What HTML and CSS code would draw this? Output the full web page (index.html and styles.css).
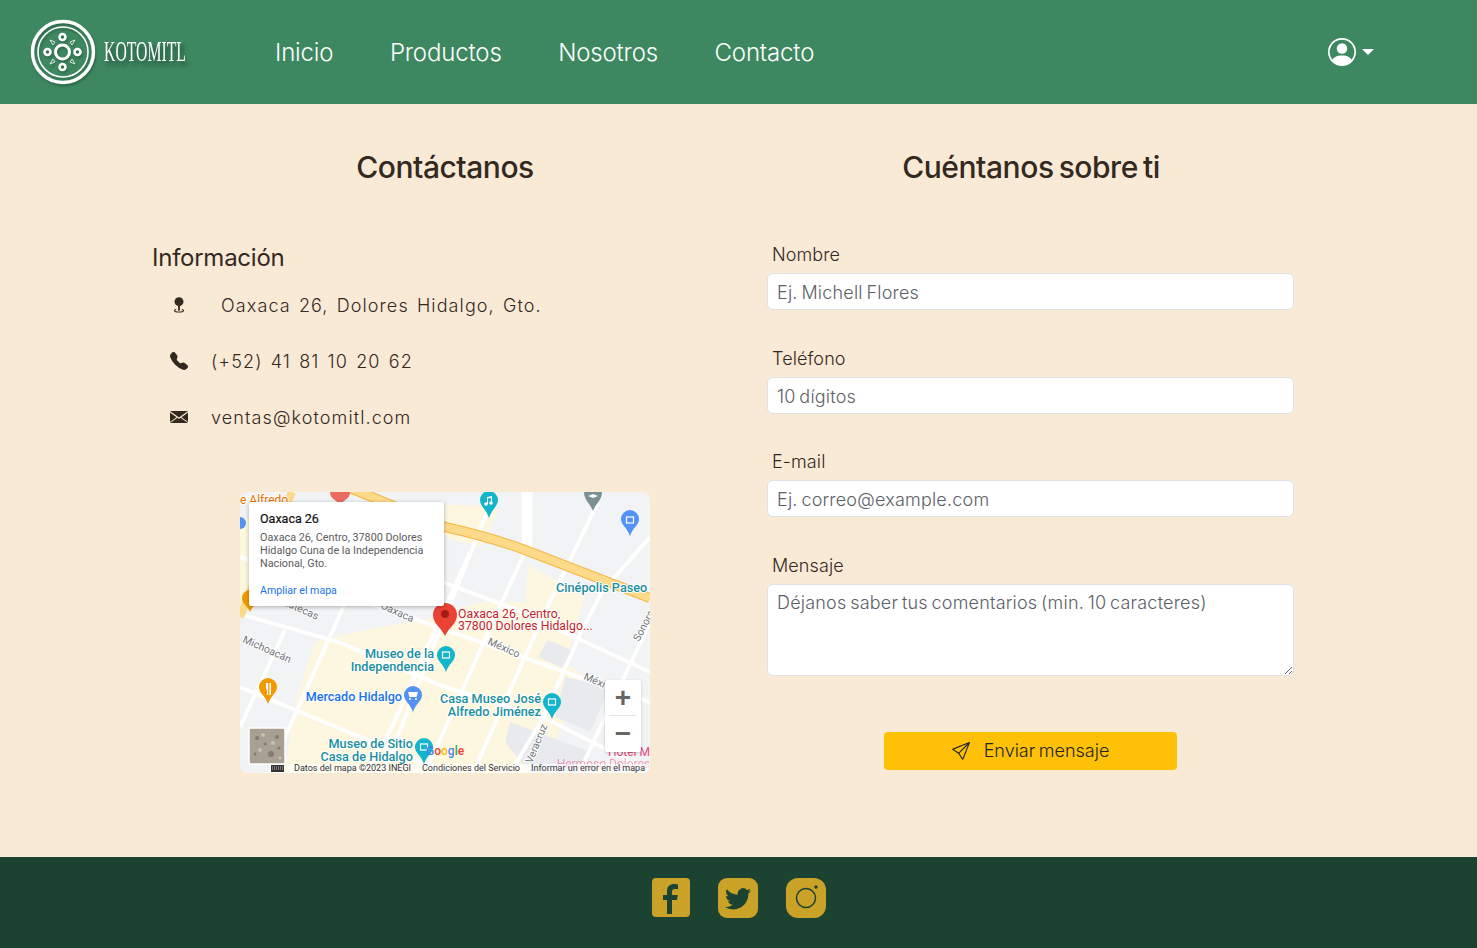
FILE: index.html
```html
<!DOCTYPE html>
<html lang="en">

<head>
    <meta charset="UTF-8">
    <meta name="viewport" content="width=device-width, initial-scale=1.0">
    <title>Kotomitl - Contacto</title>
    <link rel="stylesheet" href="styles.css">
</head>

<body>
    <header class="topbar">
        <a class="brand" href="#">
            <svg class="brand-logo" viewBox="0 0 66 66" width="66" height="66">
                <circle cx="33" cy="33" r="30.5" fill="none" stroke="#fff" stroke-width="3.5" />
                <circle cx="33" cy="33" r="25" fill="none" stroke="#fff" stroke-width="1.6" />
                <circle cx="32.500" cy="33" r="7" fill="none" stroke="#fff" stroke-width="3" />
                <circle cx="32.500" cy="18" r="3" fill="none" stroke="#fff" stroke-width="2.6" />
                <circle cx="32.500" cy="48" r="3" fill="none" stroke="#fff" stroke-width="2.6" />
                <circle cx="17.500" cy="33" r="3" fill="none" stroke="#fff" stroke-width="2.6" />
                <circle cx="47.500" cy="33" r="3" fill="none" stroke="#fff" stroke-width="2.6" />
                <path d="M20 21l5 2-2 3zM45 21l-5 2 2 3zM20 45l5-2-2-3zM45 45l-5-2 2-3z" fill="none" stroke="#fff" stroke-width=".8" />
            </svg>
            <svg class="brand-name" viewBox="0 0 88 30" width="88" height="30">
                <text x="1" y="24" textLength="82" lengthAdjust="spacingAndGlyphs">KOTOMITL</text>
            </svg>
        </a>
        <nav class="nav">
            <a href="#">Inicio</a>
            <a href="#">Productos</a>
            <a href="#">Nosotros</a>
            <a href="#">Contacto</a>
        </nav>
        <button class="user-btn" type="button">
            <svg viewBox="0 0 16 16" width="28" height="28" fill="#fff">
                <path d="M11 6a3 3 0 1 1-6 0 3 3 0 0 1 6 0z" />
                <path fill-rule="evenodd" d="M0 8a8 8 0 1 1 16 0A8 8 0 0 1 0 8zm8-7a7 7 0 0 0-5.468 11.37C3.242 11.226 4.805 10 8 10s4.757 1.225 5.468 2.37A7 7 0 0 0 8 1z" />
            </svg>
            <span class="caret"></span>
        </button>
    </header>

    <main class="content">
        <section class="col">
            <h2 class="title">Contáctanos</h2>
            <h3 class="info-title">Información</h3>
            <ul class="info-list">
                <li>
                    <svg class="info-icon" viewBox="0 0 16 16" width="18" height="18" fill="#33291f">
                        <circle cx="8" cy="5" r="4" />
                        <rect x="7.2" y="8" width="1.6" height="5" />
                        <path d="M5.5 11.5c-1.6.4-2 1-2 1.5 0 1 2 1.7 4.500 1.700s4.500-.7 4.500-1.700c0-.5-.4-1.100-2-1.500v1c.6.1 1 .3 1 .5 0 .4-1.500.8-3.500.8s-3.500-.4-3.500-.8c0-.2.4-.4 1-.5z" />
                    </svg>
                    <span class="info-text info-text-far">Oaxaca 26, Dolores Hidalgo, Gto.</span>
                </li>
                <li>
                    <svg class="info-icon" viewBox="0 0 16 16" width="18" height="18" fill="#33291f">
                        <path d="M1.885.511a1.745 1.745 0 0 1 2.61.163L6.29 2.98c.329.423.445.974.315 1.494l-.547 2.19a.678.678 0 0 0 .178.643l2.457 2.457a.678.678 0 0 0 .644.178l2.189-.547a1.745 1.745 0 0 1 1.494.315l2.306 1.794c.829.645.905 1.87.163 2.611l-1.034 1.034c-.74.74-1.846 1.065-2.877.702a18.634 18.634 0 0 1-7.01-4.42 18.634 18.634 0 0 1-4.42-7.009c-.362-1.03-.037-2.137.703-2.877L1.885.511z" />
                    </svg>
                    <span class="info-text">(+52) 41 81 10 20 62</span>
                </li>
                <li>
                    <svg class="info-icon" viewBox="0 0 18 18" width="18" height="18" fill="#33291f">
                        <path d="M0 3h18L9 9.500z" />
                        <path d="M0 4.500v9.500l6.500-4.800zM18 4.500v9.500l-6.500-4.800z" />
                        <path d="M0 15h18l-7.500-5.200L9 11 7.500 9.800z" />
                    </svg>
                    <span class="info-text">ventas@kotomitl.com</span>
                </li>
            </ul>

            <div class="map">
                <svg class="map-canvas" viewBox="0 0 410 281" width="410" height="281">
                    <rect width="410" height="281" fill="#f1f3f4" />
                    <g fill="#fef7e0">
                        <polygon points="125,138 195,125 242,110 285,110 288,73 345,105 325,170 345,185 300,281 45,281 55,210 75,150" />
                        <polygon points="0,30 50,5 40,100 0,120" />
                        <polygon points="205,13 235,13 258,18 240,55 205,45" />
                    </g>
                    <g fill="#e8eaed">
                        <polygon points="308,148 332,158 322,176 298,165" />
                        <polygon points="325,185 370,195 350,240 315,225" />
                        <polygon points="270,230 350,260 345,281 290,281 265,250" />
                    </g>
                    <g fill="none" stroke="#fff" stroke-width="4">
                        <path d="M287 0V58" stroke-width="11" />
                        <path d="M0 65L155 120 410 210" />
                        <path d="M100 50L205 91 272 116 410 180" />
                        <path d="M0 122L98 150 205 195 305 226 410 280" />
                        <path d="M0 195L205 280" />
                        <path d="M255 0L235 50 215 100 143 281" />
                        <path d="M285 60L262 110 185 281" />
                        <path d="M358 10L305 120 233 281" />
                        <path d="M410 45L362 100 342 138 302 228 270 281" />
                        <path d="M410 130L345 268 340 281" />
                        <path d="M45 138L0 235" />
                        <path d="M110 100L45 245 30 281" />
                        <path d="M230 60L152 235 125 281" />
                    </g>
                    <g fill="none">
                        <path d="M110 -4L205 35Q250 45 285 58L410 106" stroke="#f5b63f" stroke-width="10" />
                        <path d="M110 -4L205 35Q250 45 285 58L410 106" stroke="#fdd98a" stroke-width="8" />
                        <path d="M52 0L0 125" stroke="#fdd98a" stroke-width="8" />
                    </g>
                    <g class="road-labels">
                        <text transform="translate(0 12)" class="alfredo">e Alfredo</text>
                        <text transform="translate(2 150) rotate(24)">Michoacán</text>
                        <text transform="translate(32 108) rotate(24)">Zacatecas</text>
                        <text transform="translate(140 116) rotate(24)">Oaxaca</text>
                        <text transform="translate(247 152) rotate(24)">México</text>
                        <text transform="translate(343 187) rotate(24)">Méxi</text>
                        <text transform="translate(292 272) rotate(-68)">Veracruz</text>
                        <text transform="translate(399 150) rotate(-62)">Sonora</text>
                    </g>
                    <g class="teal-labels">
                        <text x="316" y="100">Cinépolis Paseo</text>
                        <text x="194" y="166" text-anchor="end">Museo de la</text>
                        <text x="194" y="179" text-anchor="end">Independencia</text>
                        <text x="301" y="211" text-anchor="end">Casa Museo José</text>
                        <text x="301" y="224" text-anchor="end">Alfredo Jiménez</text>
                        <text x="173" y="256" text-anchor="end">Museo de Sitio</text>
                        <text x="173" y="269" text-anchor="end">Casa de Hidalgo</text>
                    </g>
                    <text class="blue-label" x="162" y="209" text-anchor="end">Mercado Hidalgo</text>
                    <text class="red-label" x="218" y="126">Oaxaca 26, Centro,</text>
                    <text class="red-label" x="218" y="138">37800 Dolores Hidalgo...</text>
                    <text class="hotel-label" x="410" y="264" text-anchor="end">Hotel M</text>
                    <text class="hotel-label faded" x="410" y="276" text-anchor="end">Hermoso Dolores</text>

                    <!-- pins -->
                    <path d="M240 8a9 9 0 0 1 18 0c0 6-6 9-9 18-3-9-9-12-9-18z" fill="#12b5cb" />
                    <path d="M344 0h18c0 8-6 11-9 19-3-8-9-11-9-19z" fill="#7b9095" />
                    <path d="M381 27a9 9 0 0 1 18 0c0 6-6 8-9 17-3-9-9-11-9-17z" fill="#5491f5" />
                    <path d="M90 0h20c0 8-6 6-10 14-4-8-10-6-10-14z" fill="#ea6b60" />
                    <path d="M197 163a9 9 0 0 1 18 0c0 6-6 8-9 17-3-9-9-11-9-17z" fill="#12b5cb" />
                    <path d="M164 203a9 9 0 0 1 18 0c0 6-6 8-9 17-3-9-9-11-9-17z" fill="#5491f5" />
                    <path d="M303 210a9 9 0 0 1 18 0c0 6-6 8-9 17-3-9-9-11-9-17z" fill="#12b5cb" />
                    <path d="M175 255a9 9 0 0 1 18 0c0 6-6 8-9 17-3-9-9-11-9-17z" fill="#12b5cb" />
                    <path d="M19 195a9 9 0 0 1 18 0c0 6-6 8-9 17-3-9-9-11-9-17z" fill="#f29900" />
                    <path d="M2 106a8 8 0 0 1 16 0c0 6-6 8-8 14-2-6-8-8-8-14z" fill="#f29900" />
                    <circle cx="0" cy="31" r="6" fill="#5491f5" />
                    <g fill="none" stroke="#fff" stroke-width="1.200">
                        <rect x="202.500" y="160" width="7" height="6" />
                        <rect x="308.500" y="207" width="7" height="6" />
                        <rect x="180.500" y="252" width="7" height="6" />
                        <rect x="386.500" y="25" width="7" height="6" />
                    </g>
                    <g fill="#fff">
                        <path d="M168 200h10l-1.500 5h-7z" />
                        <circle cx="170" cy="207" r="1" />
                        <circle cx="176" cy="207" r="1" />
                        <path d="M26 191v5c0 1 .5 1.500 1 1.500V203h1.200v-12zM31 191h-1.500v12H31z" />
                        <circle cx="246" cy="12" r="1.800" />
                        <circle cx="251" cy="11" r="1.800" />
                        <path d="M247 12V5l5-1v7h-1V6l-3 .6V12z" />
                        <path d="M348 4l5-2 5 2-5 2z" />
                    </g>
                    <path d="M193 123c0-7 5-12 12-12s12 5 12 12c0 9-8 12-12 21-4-9-12-12-12-21z" fill="#ea4335" />
                    <circle cx="205" cy="122" r="4" fill="#a61c14" />

                    <!-- street view thumb and footer strip -->
                    <rect x="9" y="236" width="36" height="36" rx="2" fill="#a9a094" stroke="#fff" stroke-width="1.500" />
                    <g fill="#847b6e">
                        <circle cx="31" cy="262" r="3" />
                        <circle cx="17" cy="246" r="2" />
                        <circle cx="37" cy="245" r="2" />
                        <circle cx="25" cy="252" r="1.500" />
                        <circle cx="15" cy="262" r="1.500" />
                        <circle cx="39" cy="256" r="1.500" />
                    </g>
                    <g fill="#c6beb1">
                        <circle cx="23" cy="243" r="2" />
                        <circle cx="33" cy="251" r="2" />
                        <circle cx="20" cy="258" r="2" />
                        <circle cx="40" cy="266" r="1.500" />
                    </g>
                    <rect x="48" y="272" width="362" height="9" fill="#fff" opacity=".65" />
                    <rect x="30" y="272" width="15" height="9" fill="#fff" />
                    <rect x="31" y="273" width="13" height="7" fill="#333" />
                    <path d="M32 275h11M32 277h11" stroke="#fff" stroke-width=".7" stroke-dasharray="1 1" />
                    <text class="map-foot" x="54" y="279">Datos del mapa ©2023 INEGI</text>
                    <text class="map-foot" x="182" y="279">Condiciones del Servicio</text>
                    <text class="map-foot" x="291" y="279">Informar un error en el mapa</text>
                    <text class="google" x="186" y="263"><tspan fill="#4285f4">G</tspan><tspan fill="#ea4335">o</tspan><tspan fill="#fbbc05">o</tspan><tspan fill="#4285f4">g</tspan><tspan fill="#34a853">l</tspan><tspan fill="#ea4335">e</tspan></text>
                </svg>
                <div class="map-popup">
                    <div class="popup-name">Oaxaca 26</div>
                    <div class="popup-address">Oaxaca 26, Centro, 37800 Dolores Hidalgo Cuna de la Independencia Nacional, Gto.</div>
                    <a class="popup-link" href="#">Ampliar el mapa</a>
                </div>
                <div class="map-zoom">
                    <button type="button">+</button>
                    <span class="map-zoom-line"></span>
                    <button type="button">&minus;</button>
                </div>
            </div>
        </section>

        <section class="col">
            <h2 class="title">Cuéntanos sobre ti</h2>
            <form class="contact-form">
                <div class="field">
                    <label for="nombre">Nombre</label>
                    <input type="text" id="nombre" placeholder="Ej. Michell Flores">
                </div>
                <div class="field">
                    <label for="telefono">Teléfono</label>
                    <input type="text" id="telefono" placeholder="10 dígitos">
                </div>
                <div class="field">
                    <label for="email">E-mail</label>
                    <input type="text" id="email" placeholder="Ej. correo@example.com">
                </div>
                <div class="field">
                    <label for="mensaje">Mensaje</label>
                    <textarea id="mensaje" placeholder="Déjanos saber tus comentarios (min. 10 caracteres)"></textarea>
                </div>
                <button class="send-btn" type="button">
                    <svg viewBox="0 0 16 16" width="16" height="16" fill="#212529">
                        <path d="M15.854.146a.5.5 0 0 1 .11.54l-5.819 14.547a.75.75 0 0 1-1.329.124l-3.178-4.995L.643 7.184a.75.75 0 0 1 .124-1.33L15.314.037a.5.5 0 0 1 .54.11ZM6.636 10.07l2.761 4.338L14.13 2.576 6.636 10.07Zm6.787-8.201L1.591 6.602l4.339 2.76 7.494-7.493Z" />
                    </svg>
                    Enviar mensaje
                </button>
            </form>
        </section>
    </main>

    <footer class="footer">
        <a class="social social-fb" href="#">
            <svg viewBox="0 0 38 39" width="38" height="39">
                <path d="M20 36V22h5l.7-5H20v-3c0-2 .8-3 2.800-3H26V6.500c-.8-.1-2-.5-3.800-.5C18 6 15 8.500 15 13v4h-4v5h4v14z" fill="#1c4231" />
            </svg>
        </a>
        <a class="social social-tw" href="#">
            <svg viewBox="0 0 16 16" width="26" height="26" fill="#1c4231">
                <path d="M5.026 15c6.038 0 9.341-5.003 9.341-9.334 0-.14 0-.282-.006-.422A6.685 6.685 0 0 0 16 3.542a6.658 6.658 0 0 1-1.889.518 3.301 3.301 0 0 0 1.447-1.817 6.533 6.533 0 0 1-2.087.793A3.286 3.286 0 0 0 7.875 6.03a9.325 9.325 0 0 1-6.767-3.429 3.289 3.289 0 0 0 1.018 4.382A3.323 3.323 0 0 1 .64 6.575v.045a3.288 3.288 0 0 0 2.632 3.218 3.203 3.203 0 0 1-.865.115 3.23 3.23 0 0 1-.614-.057 3.283 3.283 0 0 0 3.067 2.277A6.588 6.588 0 0 1 .78 13.58a6.32 6.32 0 0 1-.78-.045A9.344 9.344 0 0 0 5.026 15z" />
            </svg>
        </a>
        <a class="social social-ig" href="#">
            <svg viewBox="0 0 40 40" width="40" height="40">
                <circle cx="20" cy="20" r="9.500" fill="none" stroke="#1c4231" stroke-width="1.500" />
                <circle cx="30" cy="9" r="1.700" fill="#1c4231" />
            </svg>
        </a>
    </footer>
</body>

</html>
```

FILE: styles.css
```css
* {
    box-sizing: border-box;
}

body {
    margin: 0;
    font-family: Inter, "Open Sans", sans-serif;
    background-color: #f9ead6;
    color: #33291f;
    display: flex;
    flex-direction: column;
    height: 948px;
}

a {
    text-decoration: none;
}

/* top bar */
.topbar {
    height: 104px;
    flex-shrink: 0;
    background-color: #3d8860;
    display: flex;
    align-items: center;
    padding-left: 30px;
}

.brand {
    display: flex;
    align-items: center;
    gap: 7px;
    width: 245px;
}

.brand-logo {
    filter: drop-shadow(1px 2px 1px rgba(0, 0, 0, .25));
}

.brand-name {
    overflow: visible;
    filter: drop-shadow(3px 4px 2px rgba(0, 0, 0, .5));
}

.brand-name text {
    font-family: "Liberation Serif", serif;
    font-size: 29px;
    fill: #fff;
}

.nav {
    display: flex;
    gap: 56.5px;
}

.nav a {
    color: #fff;
    font-size: 24px;
    font-weight: 300;
    letter-spacing: -.15px;
}

.user-btn {
    margin-left: 514px;
    padding: 0;
    border: 0;
    background: none;
    display: flex;
    align-items: center;
    gap: 6px;
}

.caret {
    width: 0;
    height: 0;
    border-top: 6px solid #fff;
    border-left: 6px solid transparent;
    border-right: 6px solid transparent;
}

/* main columns */
.content {
    flex-grow: 1;
    display: grid;
    grid-template-columns: 586px 586px;
    padding: 0 153px 0 152px;
}

.title {
    margin: 44px 0 0;
    font-size: 30px;
    line-height: 38px;
    font-weight: 500;
    letter-spacing: -.45px;
    word-spacing: -2.5px;
    text-align: center;
}

.info-title {
    margin: 57px 0 0;
    font-size: 24px;
    line-height: 29px;
    font-weight: 400;
    letter-spacing: -.25px;
}

.info-list {
    list-style: none;
    margin: 0;
    padding: 0 0 0 18px;
}

.info-list li {
    height: 56px;
    display: flex;
    align-items: center;
    gap: 23px;
}

.info-list li:first-child {
    margin-top: 5px;
}

.info-text {
    font-size: 18px;
    font-weight: 300;
    letter-spacing: 1.1px;
    word-spacing: 2px;
}

.info-text-far {
    margin-left: 10px;
}

/* map */
.map {
    position: relative;
    width: 410px;
    height: 281px;
    margin: 47px 0 0 88px;
    border-radius: 8px;
    overflow: hidden;
    font-family: Roboto, sans-serif;
}

.map-canvas {
    display: block;
}

.road-labels text {
    font-size: 10.500px;
    fill: #70757a;
    stroke: #fff;
    stroke-width: 2px;
    paint-order: stroke;
}

.road-labels .alfredo {
    font-size: 12px;
    fill: #e37400;
}

.teal-labels text {
    font-size: 12.700px;
    font-weight: 500;
    fill: #1a8f9f;
    stroke: #fff;
    stroke-width: 2px;
    paint-order: stroke;
}

.blue-label {
    font-size: 12.600px;
    font-weight: 500;
    fill: #1a73e8;
    stroke: #fff;
    stroke-width: 2px;
    paint-order: stroke;
}

.red-label {
    font-size: 12.300px;
    fill: #c5221f;
    stroke: #fff;
    stroke-width: 2px;
    paint-order: stroke;
}

.hotel-label {
    font-size: 12px;
    fill: #e8477d;
}

.hotel-label.faded {
    opacity: .5;
}

.map-foot {
    font-size: 9px;
    fill: #333;
}

.google {
    font-size: 12px;
    font-weight: 500;
}

.map-popup {
    position: absolute;
    left: 9px;
    top: 10px;
    width: 195px;
    height: 104px;
    padding: 10px 11px;
    background: #fff;
    border-radius: 2px;
    box-shadow: 0 1px 4px rgba(0, 0, 0, .3);
}

.popup-name {
    font-size: 12.500px;
    line-height: 14px;
    font-weight: 400;
    color: #111;
    -webkit-text-stroke: .2px #111;
}

.popup-address {
    margin-top: 5px;
    font-size: 10.800px;
    line-height: 13px;
    color: #5b5b5b;
}

.popup-link {
    display: block;
    margin-top: 14px;
    font-size: 10.600px;
    line-height: 13px;
    color: #1a73e8;
}

.map-zoom {
    position: absolute;
    left: 365px;
    top: 188px;
    width: 36px;
    height: 72px;
    background: #fff;
    border-radius: 2px;
    box-shadow: 0 1px 3px rgba(0, 0, 0, .2);
    display: flex;
    flex-direction: column;
    align-items: center;
}

.map-zoom button {
    width: 36px;
    height: 35px;
    padding: 0;
    border: 0;
    background: none;
    color: #666;
    font-family: "Liberation Sans", sans-serif;
    font-size: 28px;
    font-weight: 700;
    line-height: 35px;
}

.map-zoom-line {
    width: 28px;
    height: 1px;
    background: #e6e6e6;
}

/* form */
.contact-form {
    margin-top: 58px;
    padding: 0 30px 0 29px;
    text-align: center;
}

.field {
    display: flex;
    flex-direction: column;
    text-align: left;
    margin-bottom: 37.670px;
}

.field label {
    padding-left: 5px;
    margin-bottom: 7px;
    font-size: 18px;
    line-height: 22px;
    font-weight: 300;
    letter-spacing: .1px;
}

.field input,
.field textarea {
    width: 527px;
    border: 1px solid #dee2e6;
    border-radius: 6px;
    background: #fff;
    padding: 7px 9px;
    font-family: inherit;
    font-size: 18px;
    font-weight: 300;
    letter-spacing: .2px;
    word-spacing: -1.5px;
    color: #212529;
}

.field input {
    height: 37px;
    padding-top: 8px;
    padding-bottom: 6px;
}

.field textarea {
    height: 92px;
    display: block;
}

.field input::placeholder,
.field textarea::placeholder {
    color: #5c6167;
    opacity: 1;
}

.send-btn {
    width: 293px;
    height: 38px;
    margin-top: 18.300px;
    border: 0;
    border-radius: 4px;
    background-color: #ffc107;
    color: #212529;
    font-family: inherit;
    font-size: 18px;
    font-weight: 300;
    word-spacing: -1.5px;
    display: inline-flex;
    align-items: center;
    justify-content: center;
    gap: 14px;
}

.send-btn svg {
    width: 18px;
    height: 18px;
}

/* footer */
.footer {
    height: 91px;
    flex-shrink: 0;
    background-color: #1c4231;
    display: flex;
    justify-content: center;
    align-items: center;
    gap: 28px;
    padding-bottom: 10px;
}

.social {
    width: 40px;
    height: 40px;
    background-color: #c9a227;
    display: flex;
    align-items: center;
    justify-content: center;
}

.social-fb {
    width: 38px;
    height: 39px;
    border-radius: 4px;
}

.social-tw {
    border-radius: 9px;
}

.social-ig {
    border-radius: 12px;
}
```
